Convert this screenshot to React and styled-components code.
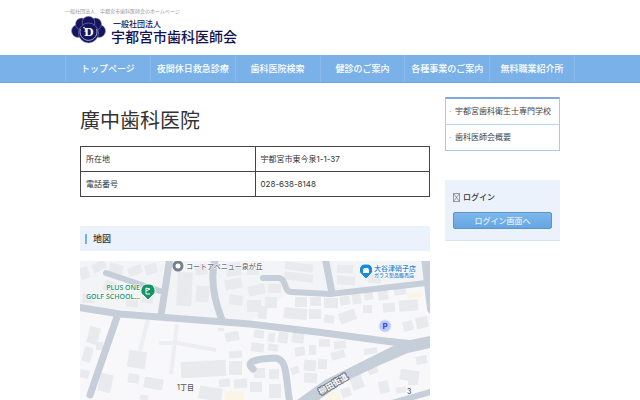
import React from 'react';
import styled, { createGlobalStyle } from 'styled-components';

const GlobalStyle = createGlobalStyle`
  * {
    box-sizing: border-box;
  }

  body {
    margin: 0;
    background-color: white;
    color: #333;
    font-family: Inter, "Noto Sans CJK JP", sans-serif;
    font-size: 8px;
    line-height: 12px;
  }
`;

const Wrap = styled.div`
  margin: 0 auto;
  max-width: 510px;
`;

const Tagline = styled.p`
  margin: 0;
  padding-top: 7px;
  color: #999;
  font-size: 5px;
  line-height: 8px;
`;

const Brand = styled.a`
  display: flex;
  align-items: center;
  gap: 5px;
  height: 40px;
  padding: 0 6px 10px;
  color: #12124f;
  text-decoration: none;
`;

const BrandText = styled.span`
  display: flex;
  flex-direction: column;
  padding-top: 4px;
  font-size: 14px;
  font-weight: 500;
  line-height: 16px;
`;

const BrandType = styled.small`
  padding-left: 2px;
  font-size: 8px;
  line-height: 10px;
`;

const Nav = styled.nav`
  background-color: #7ab1e8;
  border-bottom: 1px solid #6ea3d8;
`;

const Menu = styled.ul`
  display: grid;
  grid-template-columns: repeat(6, minmax(0, 1fr));
  list-style: none;
  margin: 0;
  padding: 0;
  border-left: 1px solid #8abbea;
`;

const MenuItem = styled.li`
  padding: 0 6px;
  border-right: 1px solid #8abbea;
`;

const MenuLink = styled.a`
  display: block;
  overflow: hidden;
  color: white;
  font-size: 9px;
  font-weight: 500;
  line-height: 27px;
  text-align: center;
  text-decoration: none;
  white-space: nowrap;
`;

const Columns = styled.div`
  display: grid;
  grid-template-columns: 1fr 115px;
  align-items: start;
  gap: 15px;
  padding: 14px 15px 0;
`;

const Title = styled.h1`
  margin: 9px 0 10px;
  color: #333;
  font-size: 20px;
  font-weight: 400;
  line-height: 30px;
`;

const Info = styled.table`
  width: 100%;
  border-collapse: collapse;
  table-layout: fixed;
`;

const Cell = styled.td`
  height: 25px;
  padding: 0 5px;
  border: 1px solid #444;
  text-align: left;
  font-weight: 400;
`;

const Section = styled.h2`
  display: flex;
  align-items: center;
  gap: 6px;
  height: 25px;
  margin: 29px 0 10px;
  padding: 0 5px;
  background-color: #ebf2fb;
  font-size: 9px;
  font-weight: 500;

  &::before {
    content: '';
    width: 2px;
    height: 10px;
    background-color: #70b3e3;
  }
`;

const SideMenu = styled.ul`
  list-style: none;
  margin: 0 0 29px;
  padding: 0;
  border: 1px solid #a9cbe8;
  border-top: 2px solid #7fa9d6;
`;

const SideItem = styled.li`
  & + & {
    border-top: 1px solid #b9d5ec;
  }
`;

const SideLink = styled.a`
  display: flex;
  gap: 4px;
  padding-left: 3px;
  color: #444;
  line-height: 25px;
  text-decoration: none;
  white-space: nowrap;

  &::before {
    content: '·';
    width: 2px;
    color: #7fa9d6;
  }
`;

const Login = styled.section`
  padding: 11px 8px;
  background-color: #ebf2fb;
  border-bottom: 1px solid #dde3ea;
`;

const LoginTitle = styled.h3`
  display: flex;
  align-items: center;
  gap: 3px;
  margin: 0 0 9px;
  font-size: 8px;
  font-weight: 500;
  line-height: 12px;
`;

const LoginButton = styled.button`
  display: block;
  width: 100%;
  height: 17px;
  padding: 0;
  border: 1px solid #5e93c6;
  border-radius: 2px;
  background: linear-gradient(#7db8ee, #65a5e1);
  color: #e4eef8;
  font-family: inherit;
  font-size: 8px;
  font-weight: 500;
  line-height: 14px;
`;

const MapView = styled.svg`
  display: block;
  width: 100%;
  background-color: #f8f8fa;
`;

const menu = [
  { label: 'トップページ' },
  { label: '夜間休日救急診療所' },
  { label: '歯科医院検索' },
  { label: '健診のご案内' },
  { label: '各種事業のご案内' },
  { label: '無料職業紹介所' },
];

const sideMenu = ['宇都宮歯科衛生士専門学校', '歯科医師会概要'];

// x, y, width, height, angle
const buildings = [
  [0, 6, 9, 12, -20], [12, 1, 14, 9, -25], [29, 3, 14, 10, 15], [48, 5, 14, 9, -20],
  [65, 3, 12, 10, -15], [24, 20, 12, 11, 20], [2, 33, 13, 9, 5], [62, 34, 11, 8, 8],
  [46, 37, 12, 9, 5], [97, 11, 15, 34, 3], [115, 3, 12, 11, -8], [116, 25, 13, 16, 5],
  [146, 2, 15, 13, -8], [145, 18, 17, 10, -10], [167, 4, 12, 10, 0], [149, 34, 14, 10, 5],
  [168, 24, 17, 10, -12], [188, 23, 13, 9, 0], [167, 39, 14, 12, 0], [185, 36, 12, 11, 0],
  [205, 2, 28, 8, 7], [204, 12, 29, 8, 7], [215, 36, 12, 10, 0], [230, 36, 11, 9, 0],
  [244, 37, 14, 10, 0], [260, 35, 10, 9, -10], [272, 32, 9, 11, -8], [284, 30, 9, 9, -8],
  [298, 28, 10, 11, -8], [314, 25, 12, 9, -8], [257, 4, 16, 8, 4], [257, 15, 18, 9, 4],
  [288, 14, 13, 8, 0], [303, 42, 12, 9, -5], [319, 39, 19, 11, -5], [204, 47, 23, 11, 5],
  [178, 45, 9, 13, 5], [229, 48, 12, 10, 0], [244, 54, 10, 8, 8], [259, 50, 17, 11, -20],
  [283, 44, 9, 8, 0], [323, 60, 10, 10, -15], [336, 56, 12, 11, -12], [8, 66, 11, 17, 15],
  [3, 86, 9, 15, 15], [16, 81, 7, 8, 0], [48, 90, 18, 17, 8], [48, 113, 11, 9, 8],
  [64, 117, 19, 11, 10], [19, 113, 13, 18, 12], [0, 109, 9, 8, 10], [60, 134, 8, 5, 8],
  [101, 100, 45, 16, -3], [145, 71, 14, 9, -10], [149, 90, 13, 7, -5], [149, 100, 13, 14, 0],
  [139, 118, 11, 8, -5], [154, 118, 13, 9, -5], [119, 126, 23, 13, 8], [138, 67, 6, 3, 0],
  [174, 69, 10, 8, 8], [188, 72, 7, 9, 8], [198, 71, 10, 11, 8], [212, 71, 12, 11, 8],
  [171, 82, 13, 9, 8], [188, 83, 10, 7, 8], [215, 86, 10, 9, -8], [229, 84, 7, 10, 0],
  [239, 78, 11, 8, 0], [254, 80, 12, 8, -8], [224, 99, 12, 11, 4], [238, 98, 9, 10, 4],
  [251, 90, 14, 8, -15], [224, 112, 13, 10, 4], [211, 106, 8, 7, -20], [284, 87, 13, 6, -8],
  [174, 107, 11, 10, 0], [189, 108, 10, 10, 0], [170, 121, 12, 10, 0], [189, 123, 12, 14, 0],
  [271, 114, 12, 14, -20], [288, 106, 10, 7, -20], [261, 127, 10, 9, -20], [299, 120, 10, 12, -12],
  [320, 109, 19, 11, 8], [328, 118, 10, 6, 0], [336, 95, 11, 8, -10], [316, 126, 10, 6, -8],
];

const roads = [
  { d: 'M26 12 L80 30', width: 6 },
  { d: 'M90 -4 L81 55', width: 7 },
  { d: 'M136 -4 C129 16 134 38 142 59', width: 7 },
  { d: 'M37 56 L10 134', width: 7 },
  { d: 'M183 17 H199 C207 18 203 31 212 31 L250 33 L303 27 L346 22', width: 6 },
  { d: 'M245 -4 L252 32', width: 7 },
  { d: 'M346 -4 L352 48', width: 10 },
  { d: 'M-4 46 L40 53 L170 63 L237 71 L320 82', width: 7 },
  { d: 'M173 108 C165 101 174 98 194 97 C209 97 205 119 210 142', width: 7 },
  { d: 'M312 142 L354 130', width: 6 },
];

const Emblem = () => (
  <svg width="35" height="28" viewBox="0 0 35 28" aria-hidden="true">
    <g fill="#15155f" stroke="#9c9dc8" strokeWidth="0.5">
      <circle cx="7" cy="15" r="6.5" />
      <circle cx="28" cy="15" r="6.5" />
      <circle cx="10.5" cy="8" r="6" />
      <circle cx="24.5" cy="8" r="6" />
      <circle cx="17.5" cy="6.5" r="6.3" />
      <circle cx="17.5" cy="17" r="10" />
    </g>
    <path d="M9.5 13 A8.5 8.5 0 1 0 25.5 13" fill="none" stroke="#c9cae2" strokeWidth="0.8" />
    <path d="M12 12 C14 10 15 13 14 16" fill="none" stroke="white" strokeWidth="1" />
    <text x="18" y="20" fill="white" fontFamily="Liberation Serif, serif" fontSize="13" fontWeight="700" textAnchor="middle">D</text>
  </svg>
);

const MissingGlyph = () => (
  <svg width="7" height="9" viewBox="0 0 7 9" aria-hidden="true">
    <path d="M.5 .5 H6.5 V8.5 H.5 Z M.5 .5 L6.5 8.5 M6.5 .5 L.5 8.5" fill="none" stroke="#777" strokeWidth="0.7" />
  </svg>
);

const AreaMap = () => (
  <MapView viewBox="0 0 350 139" role="img" aria-label="地図">
    <path d="M0 0 H350 V22 L252 33 L210 31 L170 60 L0 45 Z" fill="#f3f4f6" />
    <g fill="#e9eaee">
      {buildings.map(([x, y, w, h, angle]) => (
        <rect key={`${x}-${y}`} x={x} y={y} width={w} height={h} transform={`rotate(${angle} ${x + w / 2} ${y + h / 2})`} />
      ))}
    </g>
    <path d="M145 131 L164 130 V139 H144 Z M248 132 L258 130 L261 139 H246 Z M326 34 L341 30 L342 36 L328 38 Z" fill="#faf5e4" />
    <path d="M68 58 L60 90 M97 63 L91 113 M79 82 H97 L136 89" fill="none" stroke="#eceef1" strokeWidth="4" />
    <g fill="none" stroke="#c6ced9" strokeLinecap="round" strokeLinejoin="round">
      {roads.map(({ d, width }) => (
        <path key={d} d={d} strokeWidth={width} />
      ))}
    </g>
    <path d="M350 75 L330 79 L310 77 L300 80 L315 84 L279 102 L245 119 L217 139 H239 L262 122 L300 104 L328 92 L350 87 Z" fill="#c6ced9" />

    <circle cx="98" cy="5" r="4" fill="white" stroke="#76818d" strokeWidth="3" />
    <g fontWeight="500" stroke="white" strokeWidth="1" paintOrder="stroke">
      <text x="106" y="8" fontSize="7" fill="#6b737d">コートアベニュー泉が丘</text>
      <g fontFamily="Open Sans, sans-serif" fontSize="7" fontWeight="600" fill="#239267" textAnchor="end">
        <text x="60" y="29">PLUS ONE</text>
        <text x="60" y="38">GOLF SCHOOL…</text>
      </g>
      <text x="294" y="10" fontSize="7" fill="#3182cf">大谷津硝子店</text>
      <text x="294" y="16" fontSize="5" fill="#3182cf">ガラス製品販売店</text>
      <text x="97" y="129" fontSize="7" fill="#555">1丁目</text>
      <text x="327" y="133" fontSize="7" fill="#555">3</text>
    </g>

    <path d="M68 23 A6.5 6.5 0 0 1 72 35 L68 39 L64 35 A6.5 6.5 0 0 1 68 23 Z" fill="#159564" stroke="white" />
    <path d="M66 33 V27 L70 28 L66 30 M66 33 H70" fill="none" stroke="white" />
    <path d="M286 3 A6 6 0 0 1 290 14 L286 18 L282 14 A6 6 0 0 1 286 3 Z" fill="#168be0" stroke="white" />
    <path d="M283 9 L284 7 H288 L289 9 V12 H283 Z" fill="white" />
    <circle cx="305" cy="65" r="6" fill="#b9c8ff" stroke="#dce3ff" />
    <text x="305" y="68" fontSize="8" fontWeight="700" fill="#3947d2" textAnchor="middle">P</text>
    <text
      x="253"
      y="126"
      fontSize="8"
      fontWeight="700"
      fill="white"
      stroke="#6f7986"
      strokeWidth="2"
      paintOrder="stroke"
      textAnchor="middle"
      transform="rotate(-31 253 123)"
    >
      柳田街道
    </text>
  </MapView>
);

const App = () => (
  <>
    <GlobalStyle />
    <header>
      <Wrap>
        <Tagline>一般社団法人　宇都宮市歯科医師会のホームページ</Tagline>
        <Brand href="#top">
          <Emblem />
          <BrandText>
            <BrandType>一般社団法人</BrandType>
            宇都宮市歯科医師会
          </BrandText>
        </Brand>
      </Wrap>
      <Nav>
        <Wrap>
          <Menu>
            {menu.map(({ label }) => (
              <MenuItem key={label}>
                <MenuLink href="#menu">{label}</MenuLink>
              </MenuItem>
            ))}
          </Menu>
        </Wrap>
      </Nav>
    </header>
    <Wrap>
      <Columns>
        <main>
          <Title>廣中歯科医院</Title>
          <Info>
            <tbody>
              <tr>
                <Cell as="th" scope="row">所在地</Cell>
                <Cell>宇都宮市東今泉1-1-37</Cell>
              </tr>
              <tr>
                <Cell as="th" scope="row">電話番号</Cell>
                <Cell>028-638-8148</Cell>
              </tr>
            </tbody>
          </Info>
          <Section>地図</Section>
          <AreaMap />
        </main>
        <aside>
          <SideMenu>
            {sideMenu.map(label => (
              <SideItem key={label}>
                <SideLink href="#side">{label}</SideLink>
              </SideItem>
            ))}
          </SideMenu>
          <Login>
            <LoginTitle>
              <MissingGlyph />
              ログイン
            </LoginTitle>
            <LoginButton type="button">ログイン画面へ</LoginButton>
          </Login>
        </aside>
      </Columns>
    </Wrap>
  </>
);

export default App;
